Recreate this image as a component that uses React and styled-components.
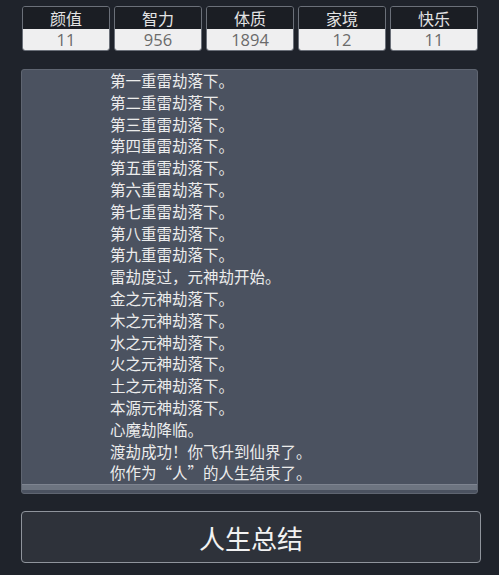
import React from 'react';
import styled, { createGlobalStyle } from 'styled-components';

const Global = createGlobalStyle`
    html, body {
        margin: 0;
        padding: 0;
        background: #1f232b;
    }
    body {
        font-family: "Noto Sans CJK SC", "Noto Sans", sans-serif;
    }
`;

const Page = styled.div`
    width: 499px;
    height: 575px;
    box-sizing: border-box;
    padding: 6px 21px 0 21px;
    background: #1f232b;
    display: flex;
    flex-direction: column;
`;

const StatBar = styled.div`
    display: grid;
    grid-template-columns: repeat(5, 88px);
    gap: 4px;
    padding-left: 1px;
`;

const Stat = styled.div`
    border: 1px solid #6b7079;
    border-radius: 3px;
    overflow: hidden;
    display: flex;
    flex-direction: column;
    height: 45px;
    box-sizing: border-box;
`;

const StatLabel = styled.div`
    height: 22px;
    background: #1b1e24;
    color: #e4e4e4;
    font-size: 16px;
    line-height: 22px;
    text-align: center;
`;

const StatValue = styled.div`
    flex: 1;
    background: #efeff0;
    color: #6a6a6a;
    font-size: 16.5px;
    line-height: 21px;
    text-align: center;
    font-family: "Open Sans", "Noto Sans", sans-serif;
`;

const Log = styled.div`
    margin-top: 18px;
    height: 425px;
    box-sizing: border-box;
    background: #4b5260;
    border: 1px solid #5f6571;
    border-radius: 3px;
    display: flex;
    flex-direction: column;
    overflow: hidden;
`;

const LogList = styled.div`
    flex: 1;
    padding: 0 0 0 88px;
    overflow: hidden;
`;

const LogLine = styled.div`
    color: #ececec;
    font-size: 15.5px;
    line-height: 21.8px;
    white-space: nowrap;
`;

const ScrollTrack = styled.div`
    height: 5px;
    margin: 0 0 3px 0;
    background: #6d7480;
    border-top: 1px solid #7e8490;
`;

const SummaryButton = styled.button`
    margin-top: 17px;
    height: 52px;
    width: 460px;
    background: #2e323a;
    border: 1px solid #8f949c;
    border-radius: 4px;
    color: #f2f2f2;
    font-size: 26px;
    font-family: "Noto Sans CJK SC", sans-serif;
    padding: 0;
    cursor: pointer;
`;

const stats = [
    { label: '颜值', value: 11 },
    { label: '智力', value: 956 },
    { label: '体质', value: 1894 },
    { label: '家境', value: 12 },
    { label: '快乐', value: 11 },
];

const lines = [
    '第一重雷劫落下。',
    '第二重雷劫落下。',
    '第三重雷劫落下。',
    '第四重雷劫落下。',
    '第五重雷劫落下。',
    '第六重雷劫落下。',
    '第七重雷劫落下。',
    '第八重雷劫落下。',
    '第九重雷劫落下。',
    '雷劫度过，元神劫开始。',
    '金之元神劫落下。',
    '木之元神劫落下。',
    '水之元神劫落下。',
    '火之元神劫落下。',
    '土之元神劫落下。',
    '本源元神劫落下。',
    '心魔劫降临。',
    '渡劫成功！你飞升到仙界了。',
    '你作为“人”的人生结束了。',
];

const App = () => {
    return (
        <Page>
            <Global />
            <StatBar>
                {stats.map(s => (
                    <Stat key={s.label}>
                        <StatLabel>{s.label}</StatLabel>
                        <StatValue>{s.value}</StatValue>
                    </Stat>
                ))}
            </StatBar>
            <Log>
                <LogList>
                    {lines.map((l, i) => <LogLine key={i}>{l}</LogLine>)}
                </LogList>
                <ScrollTrack />
            </Log>
            <SummaryButton>人生总结</SummaryButton>
        </Page>
    );
};

export default App;
